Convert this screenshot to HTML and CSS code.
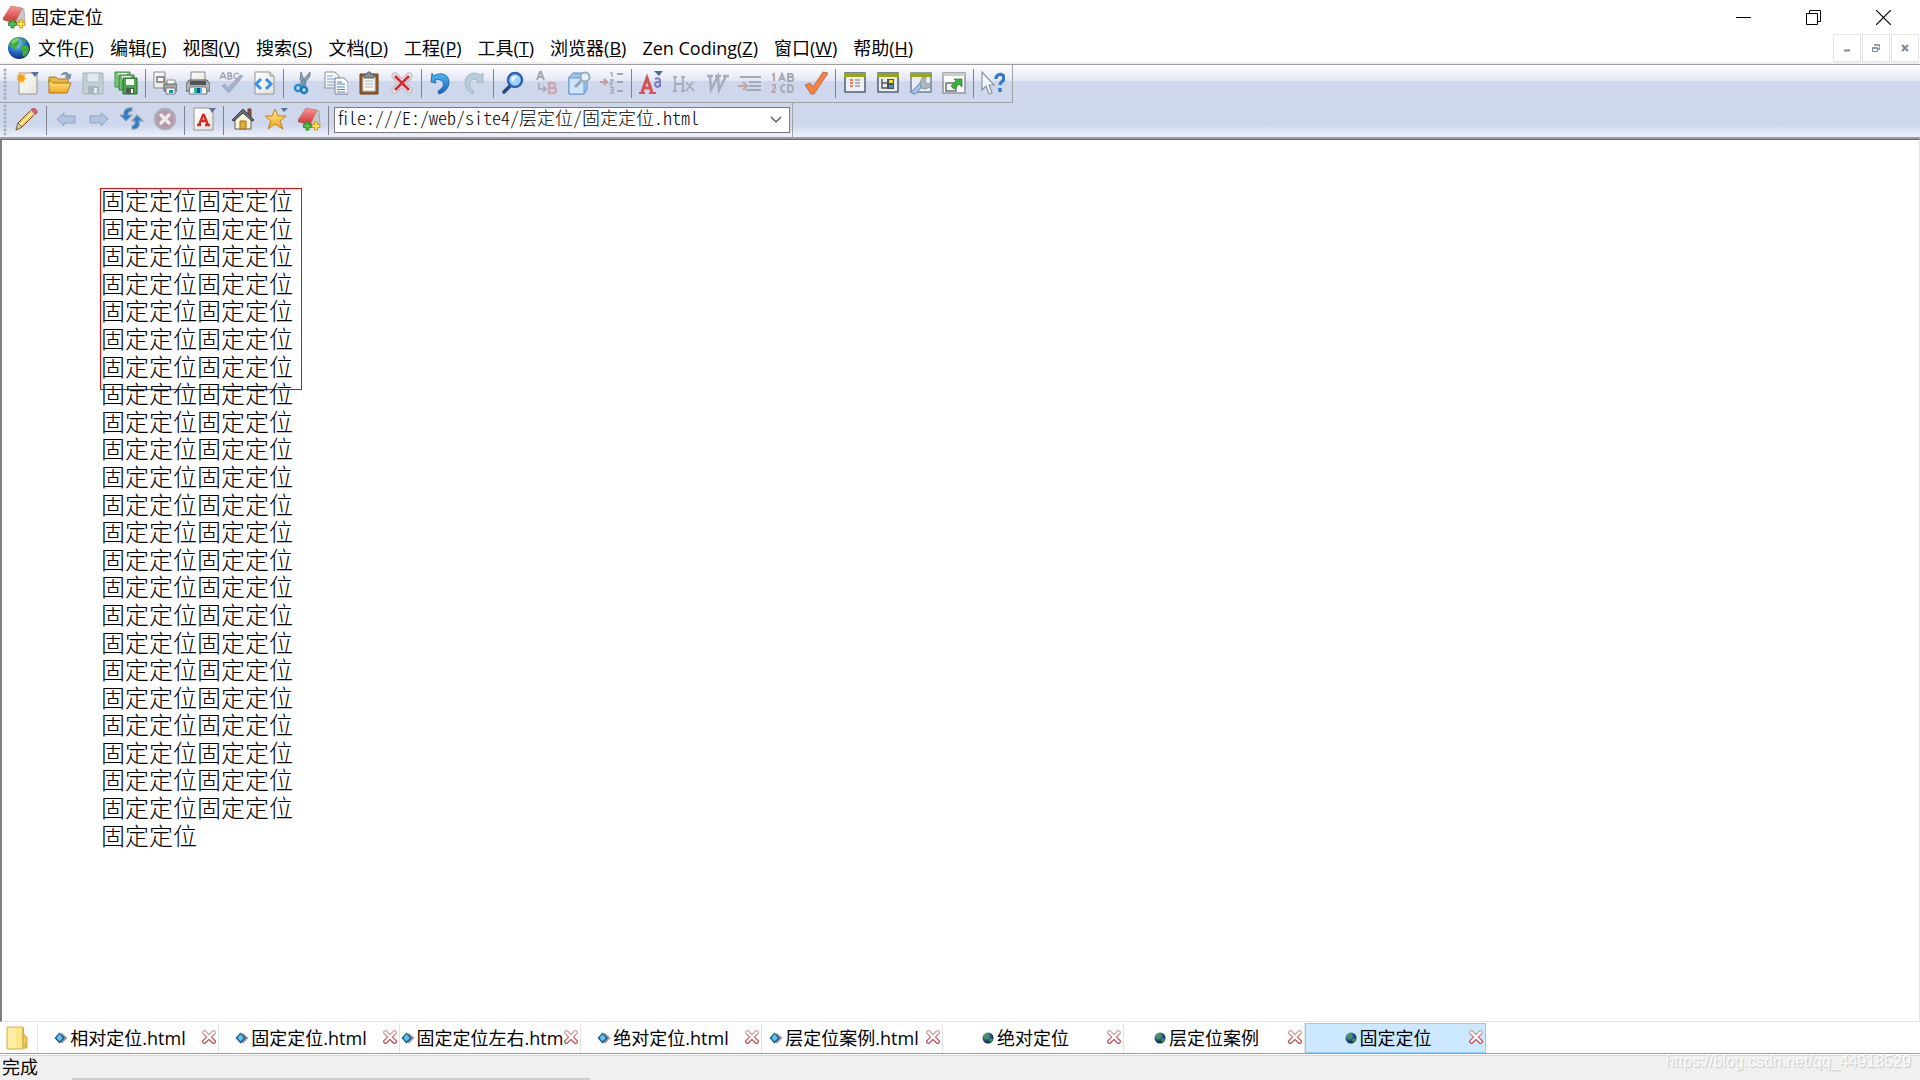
FILE: index.html
```html
<!DOCTYPE html>
<html lang="zh-CN">
<head>
  <meta charset="UTF-8" />
  <meta name="viewport" content="width=device-width, initial-scale=1.0"/>
  <title>固定定位</title>
  <link rel="stylesheet" href="styles.css">
</head>
<body>
  <!-- shared icons -->
  <svg class="defs" width="0" height="0" aria-hidden="true">
    <defs>
      <linearGradient id="gRed" x1="0" y1="0" x2="0" y2="1"><stop offset="0" stop-color="#f59a94"/><stop offset="1" stop-color="#d8363b"/></linearGradient>
      <linearGradient id="gGold" x1="0" y1="0" x2="0" y2="1"><stop offset="0" stop-color="#ffe98e"/><stop offset="1" stop-color="#f0a81c"/></linearGradient>
      <linearGradient id="gPage" x1="0" y1="0" x2="1" y2="1"><stop offset="0" stop-color="#ffffff"/><stop offset="1" stop-color="#e4e3dc"/></linearGradient>
      <linearGradient id="gBlue" x1="0" y1="0" x2="0" y2="1"><stop offset="0" stop-color="#4fb9f2"/><stop offset="1" stop-color="#1b5fb8"/></linearGradient>
      <linearGradient id="gX" x1="0" y1="0" x2="0" y2="1"><stop offset="0" stop-color="#c9a3a3"/><stop offset="1" stop-color="#c8474b"/></linearGradient>
      <radialGradient id="gGlobe" cx=".4" cy=".3" r=".75"><stop offset="0" stop-color="#a8dcff"/><stop offset=".5" stop-color="#2a6fd0"/><stop offset="1" stop-color="#0b2470"/></radialGradient>
      <radialGradient id="gSmall" cx=".35" cy=".3" r=".75"><stop offset="0" stop-color="#9cc4d8"/><stop offset=".5" stop-color="#28588c"/><stop offset="1" stop-color="#081838"/></radialGradient>
    </defs>
    <symbol id="logo" viewBox="0 0 24 24">
      <path d="M19 3l3 1 1 14-6 3-3-5z" fill="#c6c8cc" stroke="#8d9094" stroke-width=".6"/>
      <path d="M9 1l11 2-6 13L1 13z" fill="url(#gRed)" stroke="#c96a68" stroke-width=".6"/>
      <path d="M1 13l13 3 1 3-14-4z" fill="#b5484b"/>
      <path d="M9 15h3v2.500h2.500v3H12V23H9v-2.500H6.500v-3H9z" fill="#4fc14a" stroke="#1e7b23" stroke-width=".8"/>
      <path d="M17.500 15h3v2.500H23v3h-2.500V23h-3v-2.500H15v-3h2.500z" fill="#ffe34a" stroke="#c08a10" stroke-width=".8"/>
    </symbol>
    <symbol id="globe" viewBox="0 0 24 24">
      <circle cx="12" cy="12" r="11" fill="url(#gGlobe)"/>
      <path d="M3 6c3-4 7-5 9-4l-1 3 2 2-3 3-1 4-4-3-3-1zM14 10l5-1 3 3-1 5-4 4-2-3 1-3-3-2zM15 3l4 2-1 2-3-1z" fill="#3fae3d"/>
      <path d="M4 6c3-3 5-4 8-4l-2 3-4 3z" fill="#9be28a" opacity=".7"/>
    </symbol>
    <symbol id="web" viewBox="0 0 14 14">
      <circle cx="7" cy="7" r="5.500" fill="url(#gSmall)"/>
      <path d="M3 5l3-3 2 2-1 3-2 1zM8 8l3-1 1 2-3 3z" fill="#3f9445"/>
    </symbol>
    <symbol id="doc" viewBox="0 0 14 14">
      <path d="M8 2l5.500 5L8 12.500 6 11l4-4-4-3.500z" fill="#9a9a9a"/>
      <path d="M5.500 1.500L11 7l-5.500 5.500L0.500 7z" fill="#1c4f86"/>
      <path d="M5.500 3L9 7l-3.500 3.500L2.300 7z" fill="#5ec3ef"/>
    </symbol>
    <symbol id="cross" viewBox="0 0 14 14">
      <path d="M2.500 2.500l9 9M11.500 2.500l-9 9" stroke="url(#gX)" stroke-width="4.600" stroke-linecap="square"/>
      <path d="M2.500 2.500l9 9M11.500 2.500l-9 9" stroke="#fff" stroke-width="2.200" stroke-linecap="square"/>
    </symbol>
  </svg>

  <header class="titlebar">
    <svg class="icon"><use href="#logo"/></svg>
    <h1 class="title">固定定位</h1>
    <div class="window-controls">
      <button type="button" aria-label="最小化"><svg width="15" height="15"><path d="M0 7.500h15" stroke="#000"/></svg></button>
      <button type="button" aria-label="还原"><svg width="15" height="15"><path d="M.5 3.500h11v11H.5zM3.500 3.500v-3h11v11h-3" fill="none" stroke="#000"/></svg></button>
      <button type="button" aria-label="关闭"><svg width="15" height="15"><path d="M0 0l15 15M15 0L0 15" stroke="#000" stroke-width="1.200"/></svg></button>
    </div>
  </header>

  <nav class="menubar">
    <svg class="icon"><use href="#globe"/></svg>
    <ul class="menu">
      <li><button type="button">文件(<u>F</u>)</button></li>
      <li><button type="button">编辑(<u>E</u>)</button></li>
      <li><button type="button">视图(<u>V</u>)</button></li>
      <li><button type="button">搜索(<u>S</u>)</button></li>
      <li><button type="button">文档(<u>D</u>)</button></li>
      <li><button type="button">工程(<u>P</u>)</button></li>
      <li><button type="button">工具(<u>T</u>)</button></li>
      <li><button type="button">浏览器(<u>B</u>)</button></li>
      <li><button type="button">Zen Coding(<u>Z</u>)</button></li>
      <li><button type="button">窗口(<u>W</u>)</button></li>
      <li><button type="button">帮助(<u>H</u>)</button></li>
    </ul>
    <div class="mdi-controls">
      <button type="button" aria-label="最小化"><svg width="8" height="8"><path d="M1 6.500h6" stroke="#7a8a9c" stroke-width="2"/></svg></button>
      <button type="button" aria-label="还原"><svg width="8" height="8"><path d="M2 1h6v4H6" fill="none" stroke="#7a8a9c" stroke-width="1.500"/><path d="M.5 4h5v3.500h-5z" fill="#fff" stroke="#7a8a9c"/><path d="M0 4h6" stroke="#7a8a9c" stroke-width="1.500"/></svg></button>
      <button type="button" aria-label="关闭"><svg width="8" height="8"><path d="M1 1l6 6M7 1L1 7" stroke="#7a8a9c" stroke-width="2.200"/></svg></button>
    </div>
  </nav>

  <section class="toolbars">
    <div class="toolbar main-tools">
      <span class="grip"></span>
      <button type="button" aria-label="新建"><svg class="icon" viewBox="0 0 24 24"><path d="M4 2h18v21H4z" fill="url(#gPage)" stroke="#98978e"/><path d="M6 1l1.500 3L11 3 9.500 6 12 8 9 9l1 3-3-1.500L5 13l-.5-3.500L1 9l2-2.500L1 4l3 .5z" fill="#ffc84a"/><circle cx="6" cy="7" r="3.500" fill="#f8a01c"/><path d="M16 1h8l-4 5z" fill="#5a7396"/></svg></button>
      <button type="button" aria-label="打开"><svg class="icon" viewBox="0 0 24 24"><path d="M1 6h7l2 2h10v5H1z" fill="#e8b845" stroke="#a47a24"/><path d="M1 22V9l4 3h18l-4 10z" fill="url(#gGold)" stroke="#b07a18"/><path d="M13 4c3-4 7-3 8 0l2-1-1 5-5-2 2-1c-1-2-3-2-6-1z" fill="#8499b4" stroke="#5b728f" stroke-width=".6"/></svg></button>
      <button type="button" aria-label="保存" disabled><svg class="icon" viewBox="0 0 24 24"><path d="M2 2h20v21H2z" fill="#c3d0d3" stroke="#a5b3b8"/><path d="M6 2h12v9H6z" fill="#e2e9ee" stroke="#b0bcc4"/><path d="M7 15h11v8H7z" fill="#aab5bf"/><path d="M13 17h3v5h-3z" fill="#e5eaf0"/></svg></button>
      <button type="button" aria-label="全部保存"><svg class="icon" viewBox="0 0 24 24"><path d="M1 1h15v15H1z" fill="#7cc77a" stroke="#418c41"/><path d="M4 2h9v4H4z" fill="#f2faf1"/><path d="M5 4h15v15H5z" fill="#69bc68" stroke="#367f38"/><path d="M8 5h9v4H8z" fill="#f2faf1"/><path d="M9 7h14v16H9z" fill="#4da550" stroke="#27692b"/><path d="M12 8h8v6h-8z" fill="#f4f8f4"/><path d="M12 17h8v6h-8z" fill="#4e5a55"/><path d="M17 18h2v4h-2z" fill="#fff"/></svg></button>
      <span class="sep"></span>
      <button type="button" aria-label="打印预览"><svg class="icon" viewBox="0 0 24 24"><path d="M1 1h11v16H1z" fill="url(#gPage)" stroke="#8b8b8b"/><path d="M4 6h7v5H4z" fill="#fff" stroke="#777" stroke-width="1.500"/><path d="M14 9h8v5h-8z" fill="#fff" stroke="#888"/><path d="M11 13h13v7H11z" fill="#a2a4a5" stroke="#5f6264"/><path d="M13 17h9v6h-9z" fill="#fff" stroke="#777"/><path d="M16 19h2v3h-2z" fill="#169b8c"/><path d="M18 19h2v3h-2z" fill="#2878d4"/></svg></button>
      <button type="button" aria-label="打印"><svg class="icon" viewBox="0 0 24 24"><path d="M5 1h14v10H5z" fill="url(#gPage)" stroke="#888"/><path d="M3 9h18l3 4v7H0v-7z" fill="#aeb0b2" stroke="#5b5d60"/><path d="M4 10h16v4H4z" fill="#505356"/><path d="M4 16h16l1 7H3z" fill="#f7f7f7" stroke="#777"/><path d="M8 17h3v5H8z" fill="#29b9a2"/><path d="M11 17h3v5h-3z" fill="#174d9a"/><path d="M14 17h2v5h-2z" fill="#50aeea"/></svg></button>
      <button type="button" aria-label="拼写检查" disabled><svg class="icon" viewBox="0 0 24 24"><path d="M1 8l2.500-6h1L7 8M2 6h4M9 2v6h2.500c2 0 2-3 0-3H9h2c2 0 2-3 0-3zM20 3c-3-2-5 0-5 2s2 4 5 2" fill="none" stroke="#9aa3b4" stroke-width="1.300"/><path d="M3 15l3-2 3 4L21 4l3 1L10 22z" fill="#a6b2ca" stroke="#8d9bb7" stroke-width=".6"/></svg></button>
      <button type="button" aria-label="查看代码"><svg class="icon" viewBox="0 0 24 24"><path d="M3 1h15l4 4v18H3z" fill="url(#gPage)" stroke="#96958e"/><path d="M18 1v4h4" fill="#ddd" stroke="#96958e"/><path d="M9 8l-5 5 5 5M14 8l5 5-5 5" fill="none" stroke="#3a92ec" stroke-width="3"/></svg></button>
      <span class="sep"></span>
      <button type="button" aria-label="剪切"><svg class="icon" viewBox="0 0 24 24"><path d="M10 1l-1 7 4 8 2-2zM19 1L8 14l3 2 8-11z" fill="#8ca0b5" stroke="#5d7690" stroke-width=".8"/><circle cx="7" cy="17" r="3" fill="none" stroke="#2492d2" stroke-width="2.500"/><circle cx="13" cy="19" r="3" fill="none" stroke="#1a7fc0" stroke-width="2.500"/></svg></button>
      <button type="button" aria-label="复制"><svg class="icon" viewBox="0 0 24 24"><path d="M1 1h10l4 4v12H1z" fill="url(#gPage)" stroke="#8b9094"/><path d="M3 5h6M3 8h8M3 11h8M3 14h8" stroke="#7ba5d4"/><path d="M11 7h9l4 4v12H11z" fill="#fff" stroke="#7c8389"/><path d="M13 11h5M13 13h8M13 16h8M13 18.500h8M13 21h8" stroke="#3d83cf" stroke-width="1.200"/></svg></button>
      <button type="button" aria-label="粘贴"><svg class="icon" viewBox="0 0 24 24"><path d="M3 3h18v20H3z" fill="#965a28" stroke="#69401f"/><path d="M6 6h12v14H6z" fill="#f8f8f4" stroke="#ccc"/><path d="M8 10h8M8 13h8M8 16h8" stroke="#a9b5ba"/><path d="M7 3h3l1-2h2l1 2h3v4H7z" fill="#8b8d8e" stroke="#5d5f60"/></svg></button>
      <button type="button" aria-label="删除"><svg class="icon" viewBox="0 0 24 24"><path d="M5 5l14 14M19 5L5 19" stroke="#b8b9c3" stroke-width="7" stroke-linecap="round"/><path d="M5 5l14 14M19 5L5 19" stroke="#f4e6e8" stroke-width="5" stroke-linecap="round"/><path d="M5 5l14 14M19 5L5 19" stroke="#d02d35" stroke-width="2.800"/></svg></button>
      <span class="sep"></span>
      <button type="button" aria-label="撤销"><svg class="icon" viewBox="0 0 24 24"><path d="M3 2l1 3c9-5 16-1 16 6 0 6-4 10-10 12l-1-3c9-5 6-13-3-11l1 3-5-1z" fill="url(#gBlue)" stroke="#175da8" stroke-width=".8"/></svg></button>
      <button type="button" aria-label="重做" disabled><svg class="icon" viewBox="0 0 24 24"><path d="M21 2l-2 2C10-1 3 4 3 12c0 5 3 9 8 11l1-3c-8-5-4-14 4-11l-2 2 7 1z" fill="#b7cbd9" stroke="#9eb3c4" stroke-width=".8"/></svg></button>
      <span class="sep"></span>
      <button type="button" aria-label="查找"><svg class="icon" viewBox="0 0 24 24"><path d="M9 15l-6 6" stroke="#24477e" stroke-width="3.500" stroke-linecap="round"/><circle cx="14" cy="9" r="7" fill="#9fd4fb" stroke="#2a63b5" stroke-width="2.500"/><path d="M10 8c1-3 4-4 6-3l-4 6z" fill="#fff" opacity=".7"/></svg></button>
      <button type="button" aria-label="替换" disabled><svg class="icon" viewBox="0 0 24 24"><path d="M3 9l3-8h1l3 8M4 6h5" fill="none" stroke="#a1a8b5" stroke-width="2"/><path d="M5 12v6h6M9 15l3 3-3 3" fill="none" stroke="#a1a8b5" stroke-width="1.500"/><path d="M15 12v10h4c4 0 4-5 0-5h-4 3c4 0 4-5 0-5z" fill="none" stroke="#c9a8b1" stroke-width="2.500"/></svg></button>
      <button type="button" aria-label="在文件中查找"><svg class="icon" viewBox="0 0 24 24"><path d="M2 6l4-4h14v16l-3 5H2z" fill="#9dc4ee" stroke="#5f90c8"/><path d="M2 7h15v16H2z" fill="#cfe5fa" stroke="#6796c9"/><path d="M14 10l-6 6" stroke="#94a5b6" stroke-width="3"/><circle cx="18" cy="6" r="4.500" fill="#e5f2fc" stroke="#98aebf" stroke-width="2"/></svg></button>
      <button type="button" aria-label="转到行" disabled><svg class="icon" viewBox="0 0 24 24"><path d="M0 11h7M4 8l3 3-3 3" fill="none" stroke="#c49b9c" stroke-width="2"/><path d="M10 2h2v4M10 9h3l-3 4h3M10 16h3v6h-3M10 19h3" fill="none" stroke="#a7adb8" stroke-width="1.500"/><path d="M17 3h6M17 11h6M17 20h6" stroke="#9fa5b1" stroke-width="2"/></svg></button>
      <span class="sep"></span>
      <button type="button" aria-label="字体"><svg class="icon" viewBox="0 0 24 24"><path d="M3 21L8 7l5 14M4 17h8" fill="none" stroke="#d25457" stroke-width="3"/><path d="M0 22h6M10 22h7" stroke="#d25457" stroke-width="2"/><path d="M16 8c4-2 5 0 5 2v6M21 11c-6-1-6 5-2 5l2-2" fill="none" stroke="#7a7bc5" stroke-width="2"/><path d="M15 0h9l-4 5z" fill="#496d96"/></svg></button>
      <button type="button" aria-label="标题" disabled><svg class="icon" viewBox="0 0 24 24"><path d="M3 6v14M11 6v14M3 13h8M1 6h4M9 6h4M1 20h4M9 20h4M14 11l8 9M21 11l-7 9" fill="none" stroke="#a6adba" stroke-width="1.800"/></svg></button>
      <button type="button" aria-label="文字" disabled><svg class="icon" viewBox="0 0 24 24"><path d="M2 5h6M5 5l1 14 7-14 1 14 7-14M10 5h6M18 5h6" fill="none" stroke="#a6adba" stroke-width="2.400"/></svg></button>
      <button type="button" aria-label="缩进" disabled><svg class="icon" viewBox="0 0 24 24"><path d="M2 6h21M11 11h12M11 15h12M8 19h15" stroke="#a4a9b5" stroke-width="2"/><path d="M0 15h8M5 11l4 4-4 4" fill="none" stroke="#c9a3a4" stroke-width="2"/></svg></button>
      <button type="button" aria-label="行号" disabled><svg class="icon" viewBox="0 0 24 24"><path d="M1 4l2-1v7M1 14h3v3l-3 4h4" fill="none" stroke="#c3a6a9" stroke-width="2"/><path d="M8 10l3-7 3 7M9 8h4M17 3v7h3c3 0 3-4 0-4h-3 3c3 0 2-3 0-3zM14 14c-5-1-6 7 0 7M17 14v7h2c4 0 4-7 0-7z" fill="none" stroke="#a4a9b5" stroke-width="1.900"/></svg></button>
      <button type="button" aria-label="检查"><svg class="icon" viewBox="0 0 24 24"><path d="M1 14l5-2 3 4L19 1l5 1-14 21H7z" fill="#f48243" stroke="#b66d4d" stroke-width=".9"/></svg></button>
      <span class="sep"></span>
      <button type="button" aria-label="列表窗口"><svg class="icon" viewBox="0 0 24 24"><path d="M2 2h20v19H2z" fill="#edf1f3" stroke="#506275" stroke-width="1.500"/><path d="M1 2h22v4H1z" fill="#9ba518"/><path d="M7 9h3M7 12h3M7 15h3" stroke="#e57e69" stroke-width="2"/><path d="M12 9h5M12 12h5M12 15h5" stroke="#9c9c9c" stroke-width="1.500"/></svg></button>
      <button type="button" aria-label="树形窗口"><svg class="icon" viewBox="0 0 24 24"><path d="M2 2h20v19H2z" fill="#e8edf0" stroke="#506275" stroke-width="1.500"/><path d="M1 2h22v4H1z" fill="#9ba518"/><path d="M6 8v9h6M6 12h6" fill="none" stroke="#555" stroke-width="1.500"/><path d="M11 8h7v10h-7z" fill="#4b5054"/><path d="M13 9h4v3h-4z" fill="#f2df29"/><path d="M13 14h4v3h-4z" fill="#4696cf"/></svg></button>
      <button type="button" aria-label="工具窗口"><svg class="icon" viewBox="0 0 24 24"><path d="M2 2h20v19H2z" fill="#e8eef3" stroke="#708498" stroke-width="1.500"/><path d="M1 2h22v4H1z" fill="#9ba518"/><path d="M5 21l8-8" stroke="#7797c8" stroke-width="5" stroke-linecap="round"/><path d="M5 21l8-8" stroke="#abc3ec" stroke-width="3" stroke-linecap="round"/><path d="M11 12l2-5 4-1-1 5 3 2 4-2-2 5-5 2-4-1z" fill="#aeb7bf" stroke="#7d8b98" stroke-width=".8"/></svg></button>
      <button type="button" aria-label="新窗口"><svg class="icon" viewBox="0 0 24 24"><path d="M1 2h22v20H1z" fill="#fff" stroke="#929699" stroke-width="1.500"/><path d="M1 2h22v3H1z" fill="#c7ccd0"/><path d="M4 12h10v8H4z" fill="#f4f4f4" stroke="#6d7377" stroke-width="1.500"/><path d="M12 8h8v8l-3-3-5 5-3-3 5-5z" fill="#30b638" stroke="#168123" stroke-width=".7"/></svg></button>
      <span class="sep"></span>
      <button type="button" aria-label="这是什么"><svg class="icon" viewBox="0 0 24 24"><path d="M1 1v18l4-4 3 8 3-1-3-8h5z" fill="#f6f8fa" stroke="#8794a3" stroke-width="1.200"/><path d="M15 8c0-6 8-6 8-1 0 4-4 3-4 7M19 17v4" fill="none" stroke="#3978cf" stroke-width="3.400"/></svg></button>
    </div>

    <div class="toolbar address-tools">
      <span class="grip"></span>
      <button type="button" aria-label="编辑"><svg class="icon" viewBox="0 0 24 24"><path d="M3 16L17 2l4 4L7 20l-6 3z" fill="#f3c95d" stroke="#765028"/><path d="M5 18L18 5" stroke="#fff0a9" stroke-width="1.500"/><path d="M17 2c2-2 6 1 5 4l-2 2-4-4z" fill="#d95c62" stroke="#9a5455" stroke-width=".7"/><path d="M15 4l1-1 4 5-1 1z" fill="#c9d1d5"/><path d="M3 16l4 4-6 3z" fill="#e6cdaa" stroke="#765028" stroke-width=".7"/></svg></button>
      <span class="sep"></span>
      <button type="button" aria-label="后退" disabled><svg class="icon" viewBox="0 0 24 24"><path d="M3 12l7-6v3h11v7H10v3z" fill="#b3c2df" stroke="#8fa2c5"/></svg></button>
      <button type="button" aria-label="前进" disabled><svg class="icon" viewBox="0 0 24 24"><path d="M21 12l-7-6v3H3v7h11v3z" fill="#b3c2df" stroke="#8fa2c5"/></svg></button>
      <button type="button" aria-label="刷新"><svg class="icon" viewBox="0 0 24 24"><path d="M12 1C6 0 3 4 4 8H0l6 6 6-6H8c0-3 1-4 4-4zM12 22c6 1 8-3 7-8h4l-6-6-5 6h3c0 3 0 4-3 5z" fill="#287ecb" stroke="#8b9eb5" stroke-width="1.200"/></svg></button>
      <button type="button" aria-label="停止" disabled><svg class="icon" viewBox="0 0 24 24"><circle cx="12" cy="12" r="11" fill="#b0a8b7" stroke="#b4b8c4"/><circle cx="12" cy="12" r="8.500" fill="#b798a5"/><path d="M8 8l8 8M16 8l-8 8" stroke="#eee9ed" stroke-width="3.500" stroke-linecap="round"/></svg></button>
      <span class="sep"></span>
      <button type="button" aria-label="文字大小"><svg class="icon" viewBox="0 0 24 24"><path d="M2 1h16l3 4v18H2z" fill="url(#gPage)" stroke="#96958e"/><path d="M7 18l4-10h1l4 10M9 14h6M5 18h4M13 18h5" fill="none" stroke="#d62b22" stroke-width="2.300"/><path d="M17 1h7l-4 5z" fill="#5a7396"/></svg></button>
      <span class="sep"></span>
      <button type="button" aria-label="主页"><svg class="icon" viewBox="0 0 24 24"><path d="M17 2h3v8h-3z" fill="#9a4a3a" stroke="#673b35"/><path d="M4 12l8-8 8 8v10H4z" fill="#fff6da" stroke="#625c50"/><path d="M1 13L12 2l11 11-2 1-9-8-9 8z" fill="#65717b" stroke="#343c44"/><path d="M9 14h6v8H9z" fill="#e9aa34" stroke="#9c681c"/></svg></button>
      <button type="button" aria-label="收藏"><svg class="icon" viewBox="0 0 24 24"><path d="M11 2l3 7h8l-6 5 3 8-8-5-7 5 3-8-6-5h7z" fill="url(#gGold)" stroke="#c78116"/><path d="M17 1h7l-4 4z" fill="#5a7396"/></svg></button>
      <button type="button" aria-label="EditPlus"><svg class="icon"><use href="#logo"/></svg></button>
      <span class="sep"></span>
      <div class="address">
        <input type="text" aria-label="地址" spellcheck="false" value="file:///E:/web/site4/层定位/固定定位.html">
        <button type="button" class="chevron" aria-label="历史记录"><svg width="12" height="8"><path d="M1 1l5 5 5-5" fill="none" stroke="#444" stroke-width="1.200"/></svg></button>
      </div>
    </div>
  </section>

  <main class="page">
    <div class="box">固定定位固定定位固定定位固定定位固定定位固定定位固定定位固定定位固定定位固定定位固定定位固定定位固定定位固定定位固定定位固定定位固定定位固定定位固定定位固定定位固定定位固定定位固定定位固定定位固定定位固定定位固定定位固定定位固定定位固定定位固定定位固定定位固定定位固定定位固定定位固定定位固定定位固定定位固定定位固定定位固定定位固定定位固定定位固定定位固定定位固定定位固定定位</div>
  </main>

  <nav class="tabs">
    <button type="button" class="folder" aria-label="文件列表"><svg width="22" height="24" viewBox="0 0 22 24"><path d="M1 1h16v22H1z" fill="#fbe68a" stroke="#d5b04a"/><path d="M2 2h8v20H2z" fill="#fff4b4" opacity=".6"/><path d="M17 2l1 7 3 2v11h-4z" fill="#f1cc5c" stroke="#cda746"/><path d="M19 17h1v4h-1z" fill="#57b5d2"/></svg></button>
    <div class="tab"><button type="button" class="tab-name"><svg><use href="#doc"/></svg>相对定位.html</button><button type="button" class="tab-close" aria-label="关闭"><svg><use href="#cross"/></svg></button></div>
    <div class="tab"><button type="button" class="tab-name"><svg><use href="#doc"/></svg>固定定位.html</button><button type="button" class="tab-close" aria-label="关闭"><svg><use href="#cross"/></svg></button></div>
    <div class="tab"><button type="button" class="tab-name"><svg><use href="#doc"/></svg>固定定位左右.htm</button><button type="button" class="tab-close" aria-label="关闭"><svg><use href="#cross"/></svg></button></div>
    <div class="tab"><button type="button" class="tab-name"><svg><use href="#doc"/></svg>绝对定位.html</button><button type="button" class="tab-close" aria-label="关闭"><svg><use href="#cross"/></svg></button></div>
    <div class="tab"><button type="button" class="tab-name"><svg><use href="#doc"/></svg>层定位案例.html</button><button type="button" class="tab-close" aria-label="关闭"><svg><use href="#cross"/></svg></button></div>
    <div class="tab"><button type="button" class="tab-name"><svg><use href="#web"/></svg>绝对定位</button><button type="button" class="tab-close" aria-label="关闭"><svg><use href="#cross"/></svg></button></div>
    <div class="tab"><button type="button" class="tab-name"><svg><use href="#web"/></svg>层定位案例</button><button type="button" class="tab-close" aria-label="关闭"><svg><use href="#cross"/></svg></button></div>
    <div class="tab active"><button type="button" class="tab-name"><svg><use href="#web"/></svg>固定定位</button><button type="button" class="tab-close" aria-label="关闭"><svg><use href="#cross"/></svg></button></div>
  </nav>

  <footer class="statusbar">
    <span>完成</span>
    <span class="watermark">https://blog.csdn.net/qq_44918529</span>
    <div class="edge"></div>
  </footer>
</body>
</html>
```

FILE: styles.css
```css
* {
  box-sizing: border-box;
}
body {
  margin: 0;
  min-height: 100vh;
  display: flex;
  flex-direction: column;
  font-family: "Open Sans", "Noto Sans CJK SC", sans-serif;
  font-size: 18px;
  line-height: 24px;
  color: #000;
  background: #fff;
}
button {
  padding: 0;
  border: none;
  background: none;
  font: inherit;
  color: inherit;
  display: flex;
  align-items: center;
  justify-content: center;
}
.defs {
  position: absolute;
}
.icon {
  width: 24px;
  height: 24px;
  flex: none;
}

/* title bar */
.titlebar {
  display: flex;
  align-items: center;
  height: 34px;
  padding: 0 2px;
}
.title {
  margin: 0 auto 0 5px;
  font-size: 18px;
  font-weight: 400;
}
.window-controls {
  display: flex;
}
.window-controls button {
  width: 70px;
  height: 32px;
}

/* menu */
.menubar {
  display: flex;
  align-items: center;
  height: 30px;
  padding-left: 7px;
  border-bottom: 2px solid #f0f0f0;
}
.menu {
  display: flex;
  gap: 16px;
  margin: 0 auto 0 7px;
  padding: 0;
  list-style: none;
}
.menu button {
  display: block;
  white-space: nowrap;
}
.mdi-controls {
  display: flex;
  gap: 1px;
  padding-right: 1px;
}
.mdi-controls button {
  width: 28px;
  height: 28px;
  border: 1px solid #e5e5e5;
}

/* toolbars */
.toolbars {
  border-top: 1px solid #a0a0a0;
  border-bottom: 2px solid #9a9ca3;
  background: linear-gradient(#fff 0, #e3e7f5 16px, #ced7eb 16px, #ced7eb 60px, #eff2fd 72px);
}
.toolbar {
  display: flex;
  align-items: center;
  width: max-content;
  border-right: 1px solid #a0a0a0;
}
.toolbar > button {
  width: 33px;
  height: 34px;
  padding-bottom: 2px;
}
.main-tools {
  height: 38px;
  padding-right: 3px;
  border-bottom: 1px solid #a0a0a0;
}
.address-tools {
  height: 34px;
  padding-right: 2px;
}
.grip {
  width: 10px;
  height: 32px;
  border-left: 3px solid transparent;
  background: radial-gradient(circle at 2px 2px, #aab0c0 1px, transparent 2px) 0 0 / 10px 4px;
}
.sep {
  width: 6px;
  height: 29px;
  background: linear-gradient(#7e828c, #7e828c) center / 1px 100% no-repeat;
}
.address {
  position: relative;
  margin-left: 3px;
}
.address input {
  display: block;
  width: 456px;
  height: 26px;
  padding: 0 24px 6px 3px;
  border: 1px solid #7a7a7a;
  background: #fff;
  color: #000;
  font-family: "Noto Sans CJK SC", sans-serif;
  font-size: 18px;
  font-weight: 300;
  line-height: 18px;
  font-feature-settings: "hwid";
}
.chevron {
  position: absolute;
  right: 1px;
  top: 1px;
  width: 26px;
  height: 24px;
}

/* previewed page */
.page {
  flex: 1;
  padding: 48px 98px;
  border: solid;
  border-width: 1px 1px 1px 2px;
  border-color: #696969 #e3e3e3 #e3e3e3 #808080;
}
.box {
  width: 202px;
  height: 202px;
  border: 1px solid #f00;
  font-family: "Liberation Serif", "Noto Sans CJK SC", serif;
  font-size: 24px;
  font-weight: 300;
  line-height: 1.15;
}

/* document tabs */
.tabs {
  display: flex;
  height: 32px;
  padding-top: 1px;
  border-bottom: 1px solid #9a9f9a;
}
.folder {
  width: 38px;
  padding-right: 4px;
  border-right: 1px solid #e3e3e3;
}
.tab {
  display: flex;
  width: 181px;
  border-right: 1px solid #e3e3e3;
}
.tab svg {
  width: 14px;
  height: 14px;
  flex: none;
}
.tab-name {
  flex: 1;
  min-width: 0;
  gap: 2px;
  overflow: hidden;
  white-space: nowrap;
  justify-content: safe center;
}
.tab-close {
  width: 16px;
  padding: 0 2px 2px 0;
}
.active {
  background: #cce8ff;
  border: 1px solid #91c9f7;
}

/* status bar */
.statusbar {
  position: relative;
  height: 26px;
  padding: 0 2px;
  border-top: 1px solid #fff;
  background: #f0f0f0;
  box-shadow: inset 0 1px #d7d7d7;
}
.watermark {
  position: absolute;
  right: 9px;
  top: -5px;
  font-family: "Liberation Sans", Arial, sans-serif;
  font-size: 16px;
  color: #fafafa;
  text-shadow: 1px 1px 1px #c4c4c4;
}
.edge {
  position: absolute;
  left: 72px;
  bottom: 0;
  width: 27%;
  height: 2px;
  background: #cdcdcd;
}
```
